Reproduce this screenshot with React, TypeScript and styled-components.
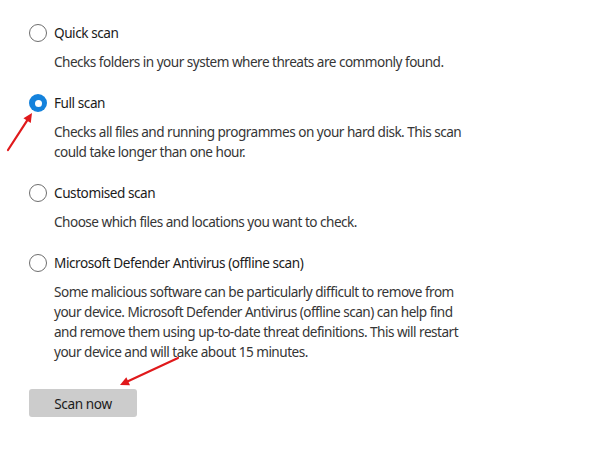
import React, { useState } from "react";
import styled, { createGlobalStyle } from "styled-components";

const GlobalStyle = createGlobalStyle`
  html, body {
    margin: 0;
    padding: 0;
    background: #ffffff;
  }
  body {
    font-family: "Noto Sans", "Open Sans", "Liberation Sans", sans-serif;
  }
`;

const Page = styled.div`
  position: relative;
  width: 600px;
  height: 458px;
  box-sizing: border-box;
  padding: 23px 0 0 29px;
  background: #fff;
  overflow: hidden;
`;

const OptionList = styled.div`
  display: flex;
  flex-direction: column;
  gap: 21px;
`;

const Option = styled.div`
  display: flex;
  flex-direction: column;
  gap: 9px;
`;

const TitleRow = styled.label`
  display: flex;
  align-items: center;
  gap: 7px;
  height: 20px;
  cursor: pointer;
`;

const Radio = styled.span<{ checked: boolean }>`
  box-sizing: border-box;
  width: 18px;
  height: 18px;
  border-radius: 50%;
  flex-shrink: 0;
  display: flex;
  align-items: center;
  justify-content: center;
  border: ${(p) => (p.checked ? "none" : "1px solid #6e6e6e")};
  background: ${(p) => (p.checked ? "#1482dc" : "#fff")};

  &::after {
    content: "";
    display: ${(p) => (p.checked ? "block" : "none")};
    width: 7px;
    height: 7px;
    border-radius: 50%;
    background: #fff;
  }
`;

const Title = styled.span`
  font-size: 13.6px;
  letter-spacing: -0.45px;
  line-height: 20px;
  color: #1b1b1b;
`;

const Description = styled.p`
  margin: 0;
  padding-left: 25px;
  font-size: 13.6px;
  letter-spacing: -0.52px;
  line-height: 20px;
  color: #363636;
`;

const ScanButton = styled.button`
  margin-top: 27px;
  width: 108px;
  height: 28px;
  border: none;
  border-radius: 3px;
  background: #cccccc;
  color: #1b1b1b;
  font-family: inherit;
  font-size: 13.6px;
  letter-spacing: -0.4px;
  cursor: pointer;
`;

const Overlay = styled.svg`
  position: absolute;
  left: 0;
  top: 0;
  pointer-events: none;
`;

const options = [
  {
    id: "quick",
    title: "Quick scan",
    lines: ["Checks folders in your system where threats are commonly found."],
  },
  {
    id: "full",
    title: "Full scan",
    lines: [
      "Checks all files and running programmes on your hard disk. This scan",
      "could take longer than one hour.",
    ],
  },
  {
    id: "custom",
    title: "Customised scan",
    lines: ["Choose which files and locations you want to check."],
  },
  {
    id: "offline",
    title: "Microsoft Defender Antivirus (offline scan)",
    lines: [
      "Some malicious software can be particularly difficult to remove from",
      "your device. Microsoft Defender Antivirus (offline scan) can help find",
      "and remove them using up-to-date threat definitions. This will restart",
      "your device and will take about 15 minutes.",
    ],
  },
];

const Arrow = ({ x1, y1, x2, y2 }: { x1: number; y1: number; x2: number; y2: number }) => {
  const ang = Math.atan2(y2 - y1, x2 - x1);
  const len = 10;
  const spread = 0.45;
  const ax = x2 - len * Math.cos(ang - spread);
  const ay = y2 - len * Math.sin(ang - spread);
  const bx = x2 - len * Math.cos(ang + spread);
  const by = y2 - len * Math.sin(ang + spread);
  const sx = x2 - 7 * Math.cos(ang);
  const sy = y2 - 7 * Math.sin(ang);
  return (
    <g>
      <line x1={x1} y1={y1} x2={sx} y2={sy} stroke="#e0191b" strokeWidth={2.2} strokeLinecap="round" />
      <polygon points={`${x2},${y2} ${ax},${ay} ${bx},${by}`} fill="#e0191b" />
    </g>
  );
};

const App = () => {
  const [selected, setSelected] = useState("full");

  return (
    <Page>
      <GlobalStyle />
      <OptionList>
        {options.map((o) => (
          <Option key={o.id}>
            <TitleRow onClick={() => setSelected(o.id)}>
              <Radio checked={selected === o.id} />
              <Title>{o.title}</Title>
            </TitleRow>
            <Description>
              {o.lines.map((l, i) => (
                <React.Fragment key={i}>
                  {l}
                  {i < o.lines.length - 1 ? <br /> : null}
                </React.Fragment>
              ))}
            </Description>
          </Option>
        ))}
      </OptionList>
      <ScanButton>Scan now</ScanButton>
      <Overlay width={600} height={458}>
        <Arrow x1={8} y1={150} x2={32} y2={113} />
        <Arrow x1={178} y1={358} x2={120} y2={385} />
      </Overlay>
    </Page>
  );
};

export default App;
